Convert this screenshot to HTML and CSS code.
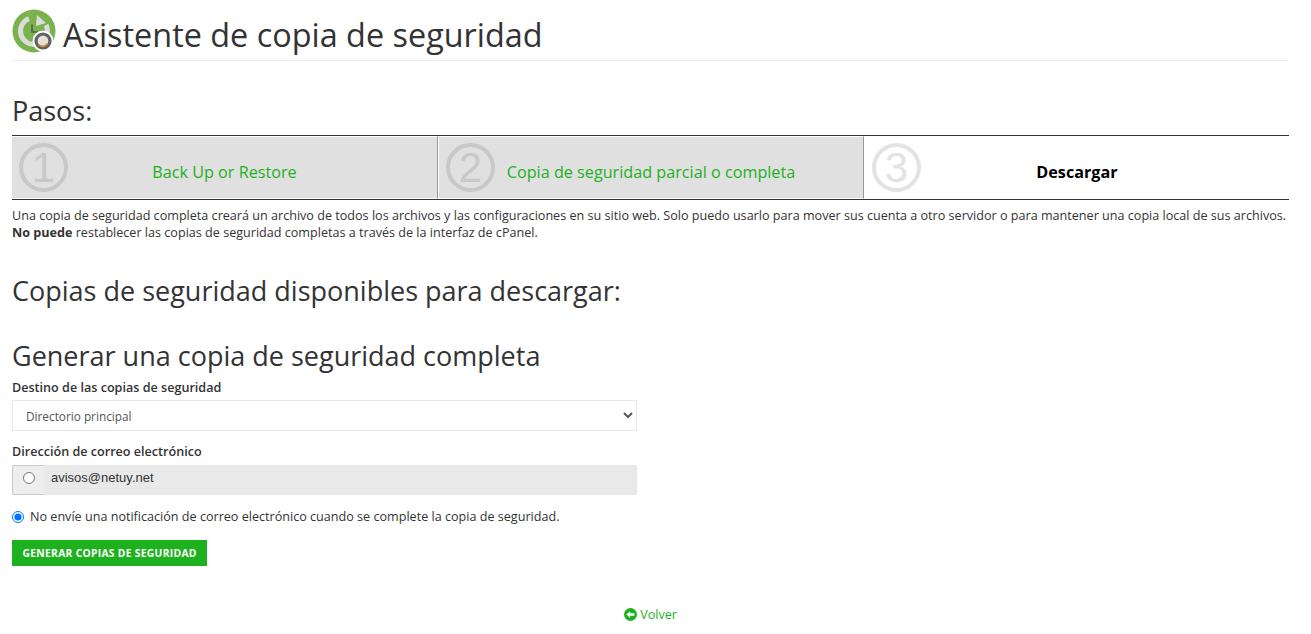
FILE: index.html
```html
<!DOCTYPE html>
<html lang="es">
<head>
<meta charset="UTF-8" />
<meta name="viewport" content="width=device-width, initial-scale=1" />
<title>Asistente de copia de seguridad</title>
<link rel="stylesheet" href="styles.css">
</head>
<body>
<header class="page-header">
  <svg class="page-icon" viewBox="0 0 44 44" width="44" height="44" aria-hidden="true">
    <circle cx="22" cy="22" r="21.5" fill="#7ab24e"/>
    <path d="M17 9.5A13.5 13.5 0 1 0 35.5 22a14 14 0 0 0 -1.5 -6" fill="none" stroke="#dcdcdc" stroke-width="5"/>
    <path d="M25 6l9 8-10 3z" fill="#dcdcdc"/>
    <path d="M20 15.5v7.5h7" fill="none" stroke="#55595c" stroke-width="1.6"/>
    <circle cx="31" cy="32" r="10.5" fill="#fff"/>
    <circle cx="31" cy="32" r="8.6" fill="#5f6265"/>
    <circle cx="31" cy="32" r="5.4" fill="#e6e2da"/>
    <path d="M26.5 35.5a5.6 5.6 0 0 0 9 -1" fill="none" stroke="#d98a2b" stroke-width="1.8"/>
  </svg>
  <h1>Asistente de copia de seguridad</h1>
</header>

<h2 class="steps-title">Pasos:</h2>
<div class="steps">
  <div class="step step-done">
    <span class="step-num">1</span>
    <a href="#uno" class="step-label">Back Up or Restore</a>
  </div>
  <div class="step step-done">
    <span class="step-num">2</span>
    <a href="#dos" class="step-label">Copia de seguridad parcial o completa</a>
  </div>
  <div class="step step-current">
    <span class="step-num">3</span>
    <span class="step-label">Descargar</span>
  </div>
</div>

<p class="intro">Una copia de seguridad completa creará un archivo de todos los archivos y las configuraciones en su sitio web. Solo puedo usarlo para mover sus cuenta a otro servidor o para mantener una copia local de sus archivos. <b>No puede</b> restablecer las copias de seguridad completas a través de la interfaz de cPanel.</p>

<h2 class="section-title available">Copias de seguridad disponibles para descargar:</h2>
<h2 class="section-title generate">Generar una copia de seguridad completa</h2>

<form class="backup-form">
  <label class="field-label" for="dest">Destino de las copias de seguridad</label>
  <select id="dest" class="field-select">
    <option>Directorio principal</option>
  </select>

  <label class="field-label email-label">Dirección de correo electrónico</label>
  <div class="email-group">
    <span class="email-addon"><input type="radio" name="notify"></span>
    <span class="email-value">avisos@netuy.net</span>
  </div>

  <label class="no-notify"><input type="radio" name="notify" checked> No envíe una notificación de correo electrónico cuando se complete la copia de seguridad.</label>

  <button type="button" class="btn-generate">Generar copias de seguridad</button>
</form>

<div class="back">
  <a href="#volver">
    <svg viewBox="0 0 14 14" width="13" height="13" aria-hidden="true">
      <circle cx="7" cy="7" r="7" fill="#1eb11e"/>
      <path d="M2.6 7l4-3.6v2.2h4.6v2.8H6.6v2.2z" fill="#fff"/>
    </svg>
    Volver
  </a>
</div>
</body>
</html>
```

FILE: styles.css
```css
body {
  font-family: "Open Sans", Arial, sans-serif;
  font-size: 12.6px;
  line-height: 17px;
  margin: 0;
  padding: 0 22px 0 12px;
  background: #fff;
  color: #333;
}
a {
  color: #1eb11e;
  text-decoration: none;
}

/* Page title */
.page-header {
  display: flex;
  align-items: flex-start;
  height: 50px;
  padding-top: 10px;
  border-bottom: 1px solid #eaeaea;
}
.page-icon {
  margin-top: -1px;
  margin-right: 7px;
  flex-shrink: 0;
}
.page-header h1 {
  margin: 0;
  font-size: 32.4px;
  line-height: 48px;
  font-weight: 400;
}

.steps-title {
  margin: 25px 0 0;
  font-size: 27px;
  line-height: 49px;
  font-weight: 400;
}

/* Steps bar */
.steps {
  display: flex;
  height: 63px;
  border-top: 1px solid #333;
  border-bottom: 1px solid #333;
}
.step {
  flex: 0 0 426px;
  position: relative;
  display: flex;
  justify-content: center;
  align-items: center;
  font-size: 16.2px;
  padding: 9px 0 0;
  box-sizing: border-box;
  border: 1px solid #fff;
  border-right-color: #999;
}
.step:first-child {
  border-left: 0;
}
.step:last-child {
  flex: 1;
  border-right: 0;
}
.step-done {
  background: #e0e0e0;
}
.step-current .step-label {
  font-weight: 700;
  color: #000;
}
.step-num {
  position: absolute;
  left: 7px;
  top: 6px;
  width: 41px;
  height: 41px;
  border: 4px solid #c8c8c8;
  border-radius: 50%;
  color: #c8c8c8;
  font-family: "Liberation Sans", Arial, sans-serif;
  font-size: 42px;
  line-height: 41px;
  text-align: center;
}
.step-current .step-num {
  border-color: #e3e3e3;
  color: #e3e3e3;
}

.intro {
  margin: 8px 0 0;
  line-height: 16.5px;
}

.section-title {
  margin: 0;
  font-size: 27px;
  line-height: 36px;
  font-weight: 400;
}
.available {
  margin-top: 32px;
}
.generate {
  margin-top: 29px;
}

/* Form */
.backup-form {
  width: 625px;
}
.field-label {
  display: block;
  font-weight: 600;
  margin-top: 5px;
  line-height: 18px;
}
.field-select {
  display: block;
  width: 100%;
  height: 31px;
  margin-top: 3px;
  padding: 0 9px;
  font-family: inherit;
  font-size: 11.8px;
  color: #555;
  background: #fff;
  border: 1px solid #e8e8e8;
  border-radius: 0;
}
.email-label {
  margin-top: 12px;
}
.email-group {
  display: flex;
  height: 30px;
  margin-top: 4px;
  background: #e9e9e9;
}
.email-addon {
  display: flex;
  align-items: center;
  justify-content: center;
  width: 33px;
  padding: 0 1px 4px 0;
  box-sizing: border-box;
  background: #eee;
  border: 1px solid #ccc;
  border-right: 0;
  border-radius: 3px 0 0 3px;
}
.email-addon input {
  width: 12px;
  height: 12px;
  margin: 0;
}
.email-value {
  margin-left: 6px;
  font-family: "Liberation Sans", Arial, sans-serif;
  font-size: 13px;
  line-height: 26px;
  color: #333;
}
.no-notify {
  display: flex;
  align-items: center;
  gap: 6px;
  margin-top: 13px;
  width: 700px;
}
.no-notify input {
  width: 12px;
  height: 12px;
  margin: 0;
}
.btn-generate {
  display: block;
  margin-top: 15px;
  height: 26px;
  padding: 0 10.5px;
  border: 0;
  background: #1eb11e;
  color: #fff;
  font-family: inherit;
  font-size: 10.3px;
  font-weight: 700;
  letter-spacing: 0.3px;
  text-transform: uppercase;
}

.back {
  margin-top: 40px;
  text-align: center;
}
.back svg {
  vertical-align: -2px;
}
```
